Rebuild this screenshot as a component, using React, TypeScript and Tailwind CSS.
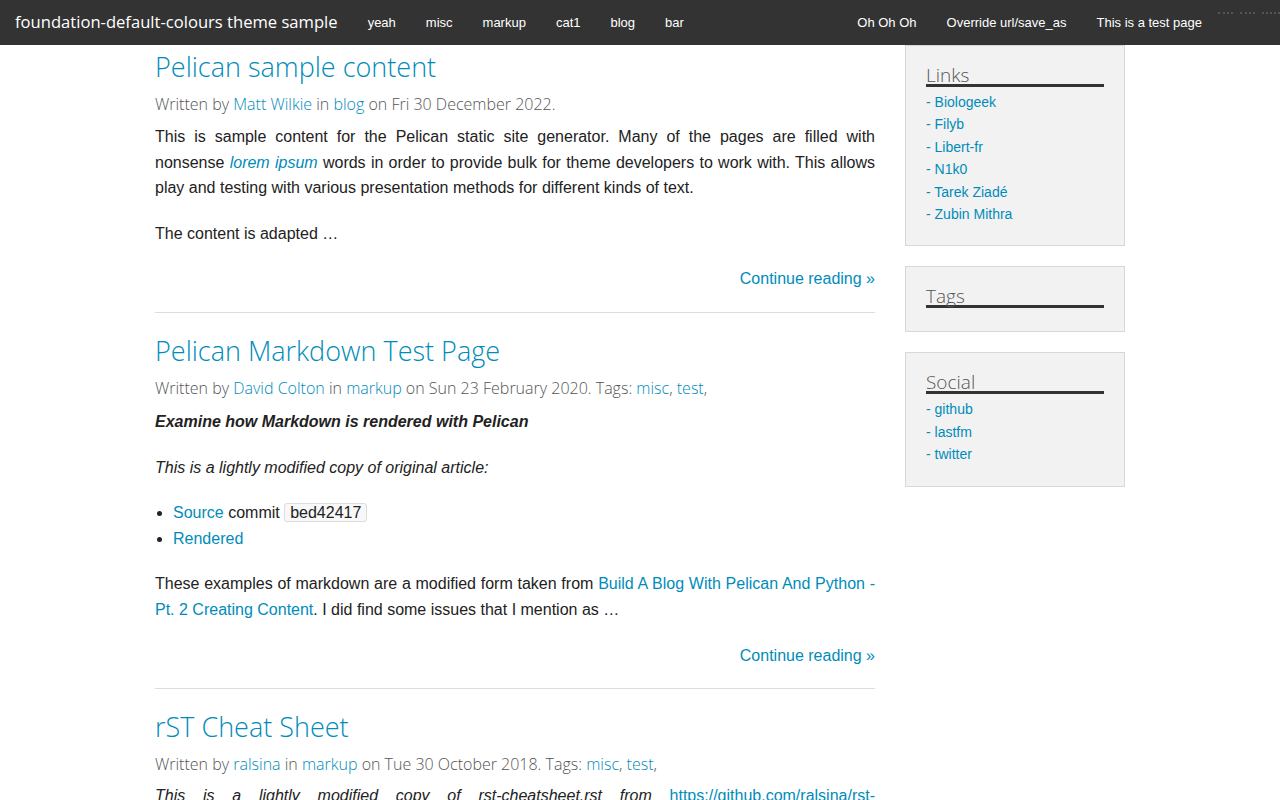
import React from "react";

const LINK = "text-[#008cba]";
const OPEN = "font-['Open_Sans',sans-serif]";
const BODY = "font-['Liberation_Sans',Arial,sans-serif]";

function Meta({ children }: { children: React.ReactNode }) {
  return (
    <p className={`${OPEN} font-light text-[16px] leading-[26px] text-[#555] mt-[7px]`}>
      {children}
    </p>
  );
}

function Title({ children }: { children: React.ReactNode }) {
  return (
    <h2 className={`${OPEN} font-light text-[27px] leading-[34px] ${LINK}`}>
      <a href="#">{children}</a>
    </h2>
  );
}

function Continue() {
  return (
    <p className={`text-right ${LINK} leading-[25.6px]`}>
      <a href="#">Continue reading »</a>
    </p>
  );
}

function Hr() {
  return <div className="border-t border-[#dddddd] mt-5 mb-[21px]" />;
}

function SideBox({ title, items, pb }: { title: string; items: string[]; pb: string }) {
  return (
    <div className={`bg-[#f2f2f2] border border-[#d8d8d8] px-5 pt-[21px] ${pb}`}>
      <h3
        className={`${OPEN} font-light text-[19px] leading-[17px] text-[#555] border-b-[3px] border-[#333333] mb-1`}
      >
        {title}
      </h3>
      {items.length > 0 && (
        <ul className={`${BODY} text-[14px] leading-[22.4px]`}>
          {items.map((it) => (
            <li key={it} className={LINK}>
              <a href="#">- {it}</a>
            </li>
          ))}
        </ul>
      )}
    </div>
  );
}

export default function App() {
  const left = ["yeah", "misc", "markup", "cat1", "blog", "bar"];
  const right = ["Oh Oh Oh", "Override url/save_as", "This is a test page"];
  return (
    <div className={`${BODY} bg-white text-[#222222] text-[16px] min-h-screen`}>
      <nav className="h-[45px] bg-[#333333] flex items-center text-white">
        <div className={`${OPEN} text-[16.6px] px-[15px] whitespace-nowrap`}>
          foundation-default-colours theme sample
        </div>
        <ul className={`${BODY} flex text-[13px]`}>
          {left.map((l) => (
            <li key={l} className="px-[15px]">
              {l}
            </li>
          ))}
        </ul>
        <div className="flex-1" />
        <ul className={`${BODY} flex text-[13px]`}>
          {right.map((l) => (
            <li key={l} className="px-[15px]">
              {l}
            </li>
          ))}
        </ul>
        <div className="self-start mt-[12px] ml-px flex gap-[7px] w-[62px]">
          <span className="w-[15px] border-t-2 border-dotted border-[#555555]" />
          <span className="w-[15px] border-t-2 border-dotted border-[#555555]" />
          <span className="w-[18px] border-t-2 border-dotted border-[#555555]" />
        </div>
      </nav>

      <div className="w-[970px] mx-auto flex gap-[30px]">
        <main className="w-[720px] pt-[5px]">
          <article>
            <Title>Pelican sample content</Title>
            <Meta>
              <span>Written by </span>
              <a href="#" className={LINK}>Matt Wilkie</a>
              <span> in </span>
              <a href="#" className={LINK}>blog</a>
              <span> on Fri 30 December 2022.</span>
            </Meta>
            <div className="mt-[7px] leading-[25.6px] text-justify">
              <p className="mb-5">
                This is sample content for the Pelican static site generator. Many of the pages are
                filled with nonsense{" "}
                <em>
                  <a href="#" className={LINK}>lorem ipsum</a>
                </em>{" "}
                words in order to provide bulk for theme developers to work with. This allows play and
                testing with various presentation methods for different kinds of text.
              </p>
              <p className="mb-5">The content is adapted …</p>
            </div>
            <Continue />
          </article>
          <Hr />
          <article>
            <Title>Pelican Markdown Test Page</Title>
            <Meta>
              <span>Written by </span>
              <a href="#" className={LINK}>David Colton</a>
              <span> in </span>
              <a href="#" className={LINK}>markup</a>
              <span> on Sun 23 February 2020. Tags: </span>
              <a href="#" className={LINK}>misc</a>
              <span>, </span>
              <a href="#" className={LINK}>test</a>
              <span>,</span>
            </Meta>
            <div className="mt-[8px] leading-[25.6px] text-justify">
              <p className="mb-5">
                <strong>
                  <em>Examine how Markdown is rendered with Pelican</em>
                </strong>
              </p>
              <p className="mb-5">
                <em>This is a lightly modified copy of original article:</em>
              </p>
              <ul className="list-disc pl-[18px] mb-5">
                <li>
                  <a href="#" className={LINK}>Source</a> commit{" "}
                  <code className="font-['Liberation_Sans',Arial,sans-serif] bg-[#f8f8f8] border border-[#dddddd] rounded-[3px] px-[5px] py-0 text-[16px]">
                    bed42417
                  </code>
                </li>
                <li>
                  <a href="#" className={LINK}>Rendered</a>
                </li>
              </ul>
              <p className="mb-5">
                These examples of markdown are a modified form taken from{" "}
                <a href="#" className={LINK}>
                  Build A Blog With Pelican And Python - Pt. 2 Creating Content
                </a>
                . I did find some issues that I mention as …
              </p>
            </div>
            <Continue />
          </article>
          <Hr />
          <article>
            <Title>rST Cheat Sheet</Title>
            <Meta>
              <span>Written by </span>
              <a href="#" className={LINK}>ralsina</a>
              <span> in </span>
              <a href="#" className={LINK}>markup</a>
              <span> on Tue 30 October 2018. Tags: </span>
              <a href="#" className={LINK}>misc</a>
              <span>, </span>
              <a href="#" className={LINK}>test</a>
              <span>,</span>
            </Meta>
            <div className="mt-[6px] leading-[25.6px] text-justify">
              <p className="mb-5">
                <em>This is a lightly modified copy of rst-cheatsheet.rst from</em>{" "}
                <a href="#" className={LINK}>
                  https://github.com/ralsina/rst-cheatsheet/blob/master/rst-cheatsheet.rst
                </a>{" "}
                <em>with some changes to better suit the theme demonstration.</em>
              </p>
            </div>
          </article>
        </main>

        <aside className="w-[220px] flex flex-col gap-5">
          <SideBox
            title="Links"
            pb="pb-5"
            items={["Biologeek", "Filyb", "Libert-fr", "N1k0", "Tarek Ziadé", "Zubin Mithra"]}
          />
          <SideBox title="Tags" pb="pb-[19px]" items={[]} />
          <SideBox title="Social" pb="pb-5" items={["github", "lastfm", "twitter"]} />
        </aside>
      </div>
    </div>
  );
}
